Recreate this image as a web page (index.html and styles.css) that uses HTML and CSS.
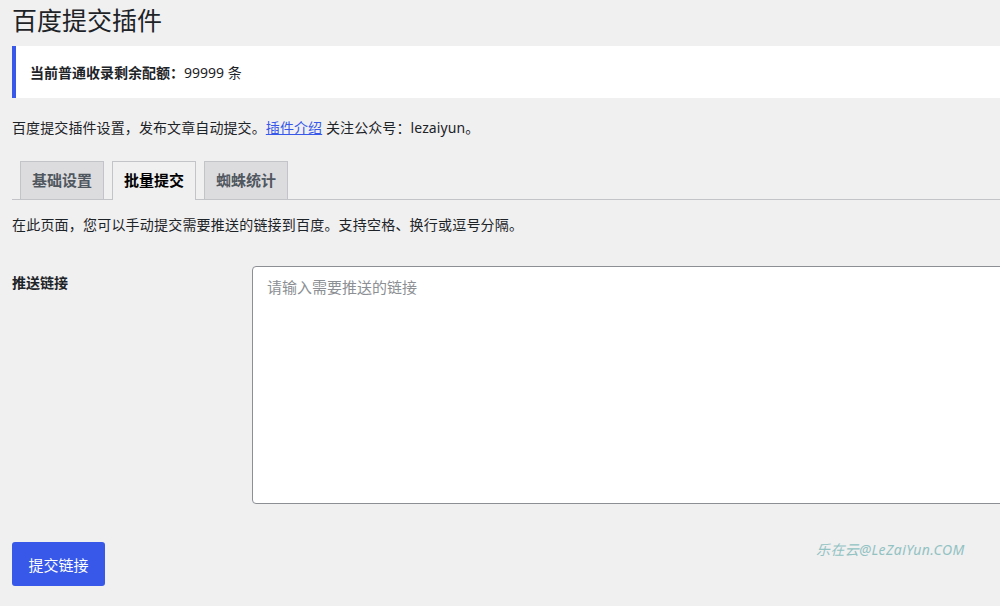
FILE: index.html
```html
<!DOCTYPE html>
<html lang="zh-CN">
  <head>
    <meta charset="UTF-8" />
    <meta name="viewport" content="width=device-width, initial-scale=1" />
    <title>百度提交插件</title>
    <link rel="stylesheet" href="styles.css">
  </head>
  <body>
    <div class="wrap">
      <h1>百度提交插件</h1>
      <div class="notice">
        <strong>当前普通收录剩余配额：</strong>99999 条
      </div>
      <p class="intro">
        百度提交插件设置，发布文章自动提交。<a href="#">插件介绍</a> 关注公众号：lezaiyun。
      </p>

      <nav class="tabs">
        <a class="tab" href="#">基础设置</a>
        <a class="tab active" href="#">批量提交</a>
        <a class="tab" href="#">蜘蛛统计</a>
      </nav>

      <p class="tip">在此页面，您可以手动提交需要推送的链接到百度。支持空格、换行或逗号分隔。</p>

      <form id="pushForm">
        <div class="row">
          <label for="links">推送链接</label>
          <textarea id="links" name="links" placeholder="请输入需要推送的链接"></textarea>
        </div>
        <div class="actions">
          <button type="submit">提交链接</button>
          <span class="mark">乐在云@LeZaiYun.COM</span>
        </div>
      </form>
    </div>
  </body>
</html>
```

FILE: styles.css
```css
body {
  font-family: "Noto Sans", "Noto Sans CJK SC", sans-serif;
  background-color: #f0f0f1;
  color: #1d2327;
  margin: 0;
  padding: 0;
  font-size: 14px;
  overflow: hidden;
}
.wrap {
  padding-left: 12px;
  width: 1100px;
}
h1 {
  font-size: 25px;
  font-weight: 400;
  line-height: 30px;
  margin: 0;
  padding: 5px 0;
}
.notice {
  margin-top: 6px;
  height: 52px;
  box-sizing: border-box;
  display: flex;
  align-items: center;
  padding: 0 14px;
  background-color: #fff;
  border-left: 4px solid #3858e9;
}
.notice strong {
  font-weight: 700;
}
.intro {
  margin: 20px 0 0;
  line-height: 20px;
  letter-spacing: 0.1px;
}
.intro a {
  color: #3858e9;
  text-decoration: underline;
}
.tabs {
  display: flex;
  gap: 8px;
  margin-top: 23px;
  padding-left: 8px;
  border-bottom: 1px solid #c3c4c7;
  height: 38px;
}
.tab {
  display: block;
  height: 38px;
  box-sizing: border-box;
  padding: 0 11px;
  line-height: 37px;
  font-size: 15px;
  font-weight: 700;
  color: #50575e;
  text-decoration: none;
  background-color: #dcdcde;
  border: 1px solid #c3c4c7;
  border-bottom: none;
}
.tab.active {
  background-color: #f0f0f1;
  color: #000;
  height: 39px;
  margin-bottom: -1px;
}
.tip {
  margin: 15px 0 0;
  line-height: 20px;
  letter-spacing: 0.2px;
}
.row {
  display: flex;
  margin-top: 31px;
}
.row label {
  width: 240px;
  flex-shrink: 0;
  font-weight: 700;
  font-size: 14px;
  line-height: 20px;
  padding-top: 7px;
}
textarea {
  width: 780px;
  height: 238px;
  box-sizing: border-box;
  border: 1px solid #8c8f94;
  border-radius: 4px;
  padding: 8px 14px;
  font-family: inherit;
  font-size: 15px;
  line-height: 24px;
  resize: none;
}
textarea::placeholder {
  color: #8c8f94;
}
.actions {
  display: flex;
  align-items: flex-start;
  margin-top: 38px;
}
button {
  width: 93px;
  height: 44px;
  background-color: #3858e9;
  color: #fff;
  border: none;
  border-radius: 3px;
  font-family: inherit;
  font-size: 15px;
  cursor: pointer;
}
button:hover {
  background-color: #2145e6;
}
.mark {
  margin-left: 711px;
  margin-top: -2px;
  font-size: 14px;
  line-height: 20px;
  font-style: italic;
  color: #92c2c2;
  letter-spacing: 0.4px;
}
```
